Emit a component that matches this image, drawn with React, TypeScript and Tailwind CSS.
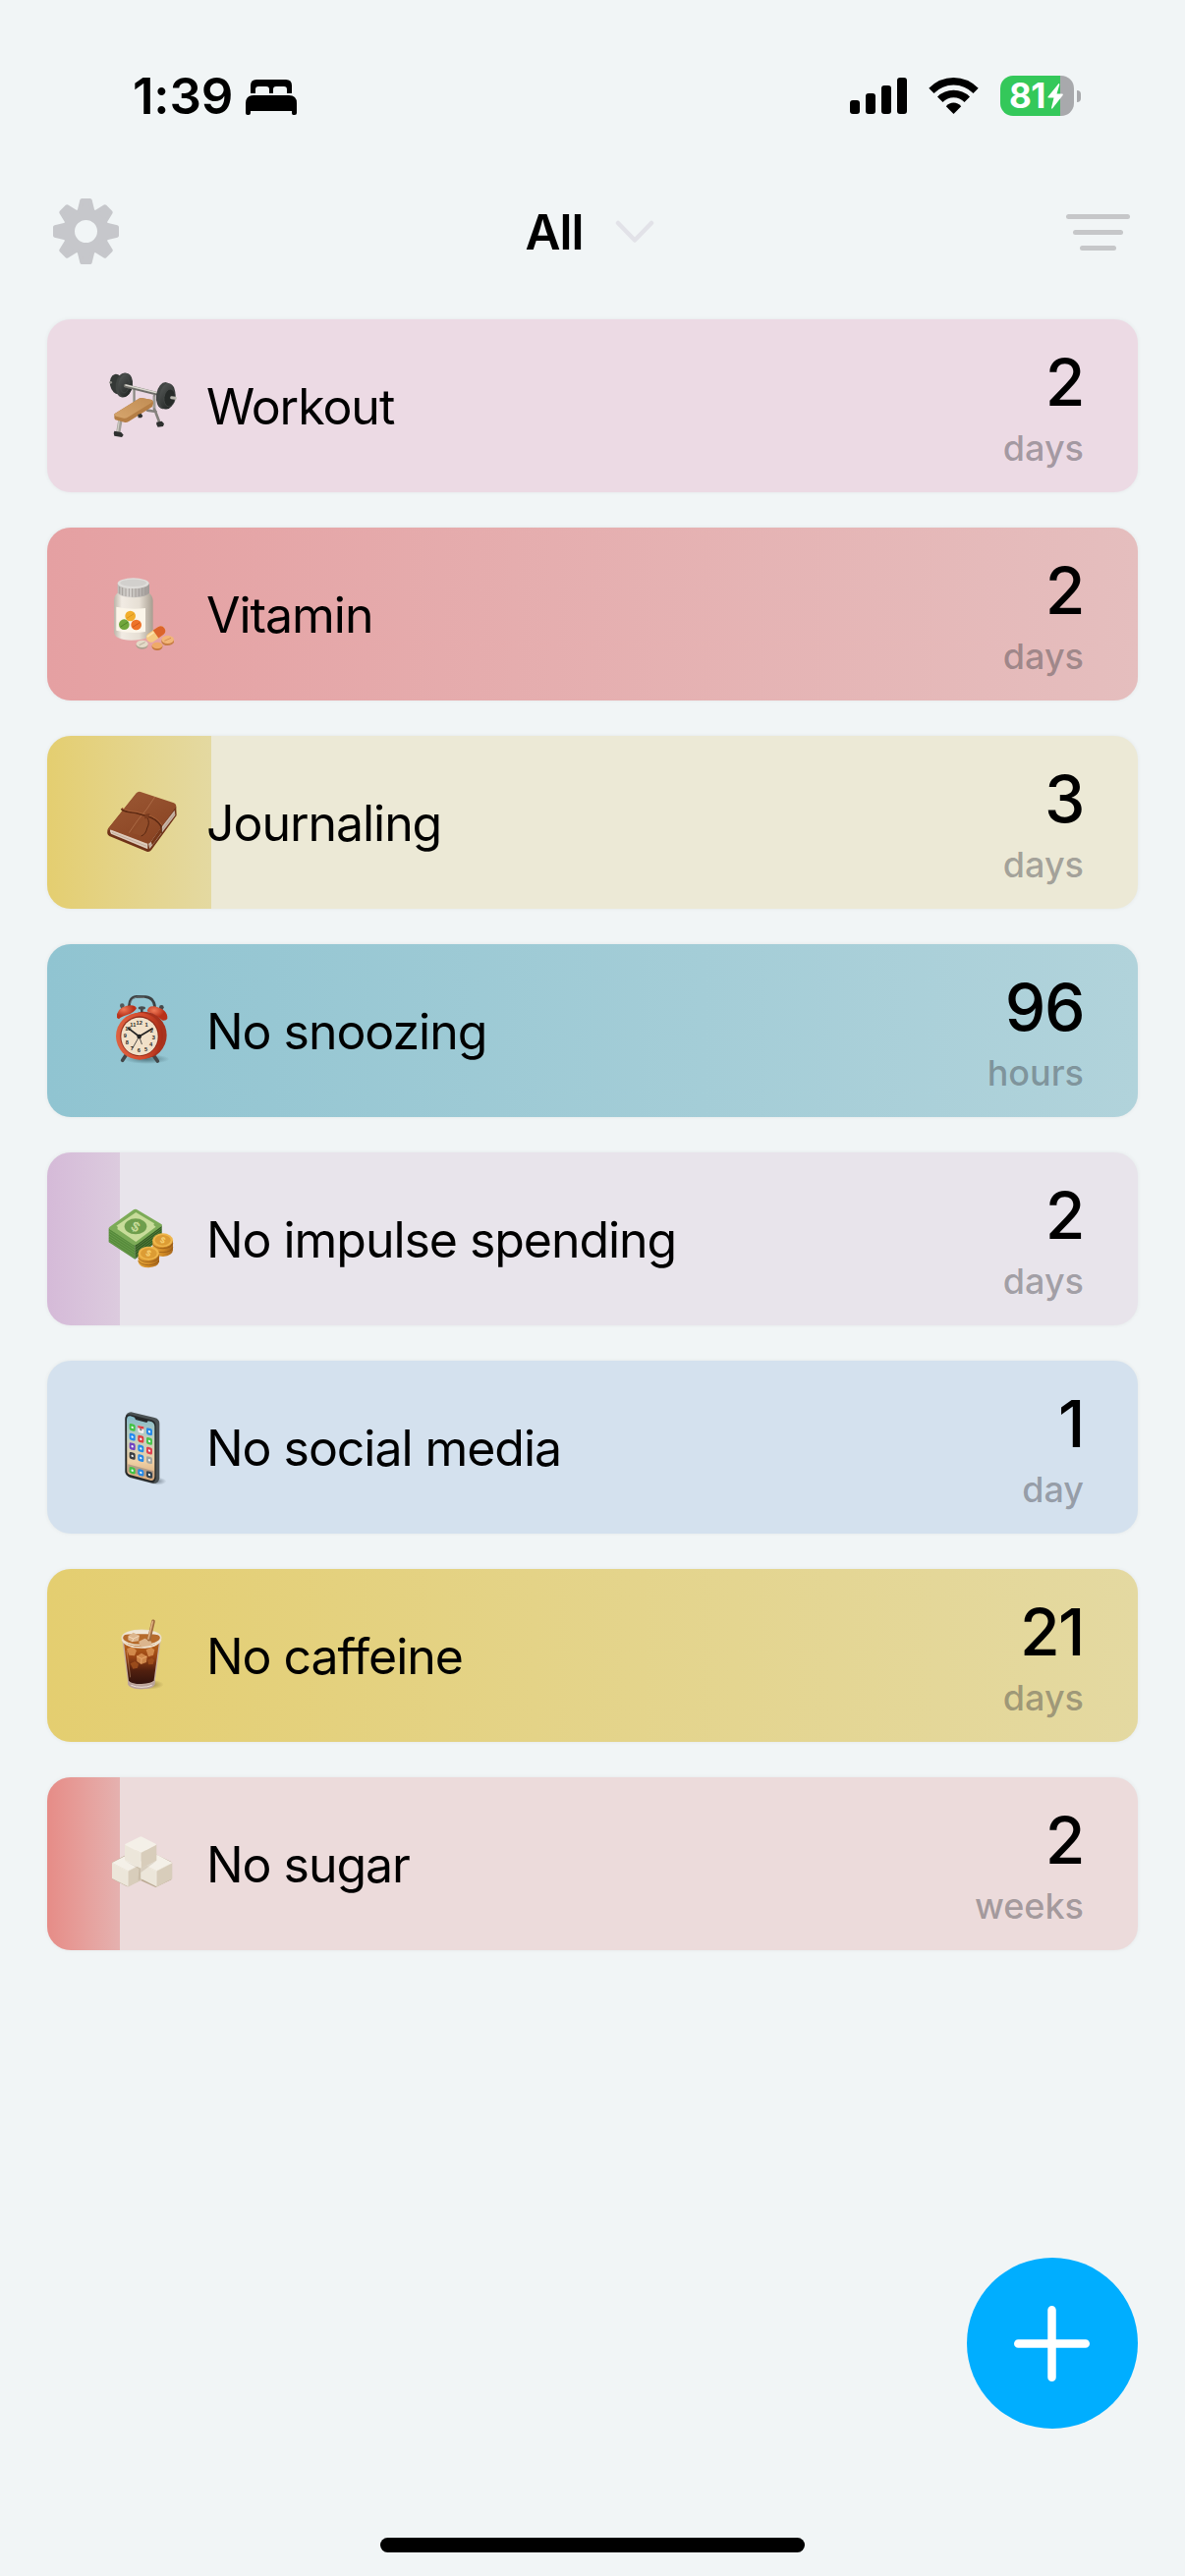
import React from 'react';
import clsx from 'clsx';

interface Habit {
  id: string;
  name: string;
  count: number;
  unit: string;
  icon: React.ReactNode;
  progress: number;
  track: string;
  fill: string;
}

const WorkoutIcon = () => (
  <svg viewBox="195 189 240 240" className="w-20 h-20">
    <defs>
      <linearGradient id="bench" x1="0" y1="1" x2="1" y2="0">
        <stop offset="0" stopColor="#d6a56d" />
        <stop offset="1" stopColor="#c18d54" />
      </linearGradient>
      <linearGradient id="plate" x1="0" y1="0" x2="1" y2="1">
        <stop offset="0" stopColor="#565a58" />
        <stop offset="1" stopColor="#1d201f" />
      </linearGradient>
    </defs>
    <path d="M289 255V302M351 280V318L368 362M330 323L356 327M306 318V340" stroke="#85827d" strokeWidth="8" fill="none" strokeLinecap="round" />
    <path d="M287 255V300M351 280V316" stroke="#b9b7b1" strokeWidth="3" fill="none" />
    <path d="M247 354L241 390" stroke="#a19e97" strokeWidth="13" />
    <path d="M244 354L239 388" stroke="#cfcdc5" strokeWidth="4" />
    <ellipse cx="237" cy="243" rx="21" ry="31" fill="#343836" transform="rotate(-12 237 243)" />
    <ellipse cx="258" cy="246" rx="25" ry="38" fill="#414543" transform="rotate(8 258 246)" />
    <ellipse cx="263" cy="246" rx="22" ry="36" fill="url(#plate)" transform="rotate(8 263 246)" />
    <ellipse cx="261" cy="246" rx="13" ry="24" fill="none" stroke="#454947" strokeWidth="2" transform="rotate(8 261 246)" />
    <path d="M263 248L362 273" stroke="#6f6e69" strokeWidth="11" strokeLinecap="round" />
    <path d="M264 246L362 270" stroke="#dad8cf" strokeWidth="5" strokeLinecap="round" />
    <ellipse cx="382" cy="278" rx="25" ry="41" fill="#414543" transform="rotate(8 382 278)" />
    <ellipse cx="391" cy="280" rx="24" ry="40" fill="url(#plate)" transform="rotate(8 391 280)" />
    <ellipse cx="398" cy="285" rx="17" ry="27" fill="#272b29" stroke="#494d4b" strokeWidth="2" transform="rotate(8 398 285)" />
    <path d="M404 284L415 286" stroke="#bbb9b0" strokeWidth="9" strokeLinecap="round" />
    <circle cx="218" cy="238" r="4" fill="#8f8e88" />
    <path d="M229 334L304 287Q309 284 316 286L344 291Q349 294 348 302L345 312L273 357Q266 361 259 359L232 352Q228 349 229 343Z" fill="#b57e45" />
    <path d="M230 334L304 287Q309 284 316 286L344 291Q349 295 343 299L270 344Q265 348 258 347L234 341Q229 339 230 334Z" fill="url(#bench)" />
    <path d="M229 386L250 390L257 398L252 405L229 401Q225 393 229 386Z" fill="#2e302f" />
    <path d="M358 359L374 356L381 364L378 372L362 374Q355 367 358 359Z" fill="#2e302f" />
    <path d="M301 336L311 333L316 340L312 346L302 346Z" fill="#2e302f" />
  </svg>
);

const VitaminIcon = () => (
  <svg viewBox="195 180 240 240" className="w-20 h-20">
    <defs>
      <linearGradient id="bottle">
        <stop offset="0" stopColor="#bdb5a9" />
        <stop offset="0.2" stopColor="#f1ebe3" />
        <stop offset="0.65" stopColor="#e6dfd4" />
        <stop offset="1" stopColor="#a79d90" />
      </linearGradient>
      <linearGradient id="cap">
        <stop offset="0" stopColor="#bdb9b5" />
        <stop offset="0.35" stopColor="#d8d5d1" />
        <stop offset="1" stopColor="#9f9a97" />
      </linearGradient>
    </defs>
    <path d="M241 234Q228 243 228 259V355Q229 379 281 380Q343 379 347 355V259Q346 243 333 234Z" fill="url(#bottle)" />
    <path d="M235 278Q279 288 324 282V354Q279 361 235 350Z" fill="#fbf5e9" />
    <path d="M239 208V235Q245 249 287 250Q330 249 336 235V208Z" fill="url(#cap)" />
    <path d="M245 216V238M254 219V243M264 221V246M274 222V247M284 222V248M294 222V248M304 221V246M314 220V244M324 218V241" stroke="#9d9894" strokeWidth="2.5" />
    <ellipse cx="287" cy="206" rx="48" ry="16" fill="#dfddda" />
    <ellipse cx="287" cy="205" rx="40" ry="11" fill="#d2d0cd" />
    <circle cx="278" cy="306" r="16" fill="#f2ae2d" />
    <path d="M267 313L289 299" stroke="#cc8818" strokeWidth="2" />
    <circle cx="259" cy="332" r="16" fill="#71a63d" />
    <path d="M248 339L270 325" stroke="#3f7420" strokeWidth="2" />
    <circle cx="296" cy="333" r="16" fill="#ee7329" />
    <path d="M285 340L307 326" stroke="#bd4b13" strokeWidth="2" />
    <g transform="rotate(-35 356 362)">
      <rect x="324" y="347" width="64" height="29" rx="14" fill="#f5c981" />
      <path d="M356 347H374Q388 349 388 361Q388 375 374 376H356Z" fill="#dc642b" />
      <path d="M332 353H352" stroke="#ffe4ae" strokeWidth="5" strokeLinecap="round" />
    </g>
    <path d="M373 378V386Q378 396 391 396Q407 395 411 386V378Z" fill="#c87e45" />
    <ellipse cx="392" cy="378" rx="19" ry="12" fill="#f2b678" />
    <path d="M382 382L402 373" stroke="#c47b3f" strokeWidth="2" />
    <path d="M296 391V398Q301 407 314 407Q327 407 331 398V391Z" fill="#aaa18e" />
    <ellipse cx="314" cy="391" rx="18" ry="11" fill="#e4dbc8" />
    <path d="M305 395L323 386" stroke="#9f9580" strokeWidth="2" />
    <path d="M344 396V402Q348 411 360 411Q372 411 376 402V396Z" fill="#c5763a" />
    <ellipse cx="360" cy="396" rx="16" ry="10" fill="#efaa68" />
  </svg>
);

const JournalIcon = () => (
  <svg viewBox="195 171 240 240" className="w-20 h-20">
    <defs>
      <linearGradient id="leather" x1="0" y1="0" x2="0.6" y2="1">
        <stop offset="0" stopColor="#9c5935" />
        <stop offset="1" stopColor="#8a4423" />
      </linearGradient>
    </defs>
    <path d="M209 312L298 202L412 236Q420 240 418 249L419 270L342 376Q336 383 328 380L214 333Q206 328 208 318Z" fill="#6f3218" />
    <path d="M217 311L331 354L331 373L219 326Q213 319 217 311Z" fill="#decbbb" />
    <path d="M333 356L413 254L415 269L337 372Z" fill="#c9b5a6" />
    <path d="M222 322L328 364M337 364L414 263" stroke="#a08b7b" strokeWidth="1.5" fill="none" />
    <path d="M211 309L296 202Q301 196 309 198L411 232Q421 237 416 246L340 351Q335 358 326 355L222 315Q215 311 209 318Z" fill="url(#leather)" />
    <path d="M353 213L328 251Q300 282 274 323" fill="none" stroke="#b87851" strokeWidth="2" />
    <path d="M250 250Q258 259 295 262L326 271Q360 280 372 303V324" fill="none" stroke="#5d2912" strokeWidth="5" />
    <path d="M252 247Q262 256 297 259L328 268Q360 276 374 299" fill="none" stroke="#a65e37" strokeWidth="3" />
    <path d="M326 271Q338 290 327 312Q323 328 311 332L281 324L320 278Z" fill="#914d2a" />
    <path d="M329 276Q339 291 329 309Q325 328 311 333" fill="none" stroke="#592711" strokeWidth="3" />
    <path d="M323 266L338 264L332 279L321 280Z" fill="#7a3b1e" />
    <path d="M341 350L372 307L372 324L345 361Z" fill="#783719" />
  </svg>
);

const ClockIcon = () => {
  const numerals = [
    ['12', 305, 278], ['1', 327, 284], ['2', 343, 302], ['3', 349, 323],
    ['4', 341, 344], ['5', 326, 359], ['6', 304, 363], ['7', 283, 357],
    ['8', 268, 339], ['9', 262, 318], ['10', 271, 298], ['11', 286, 284],
  ] as const;

  return (
    <svg viewBox="195 177 240 240" className="w-20 h-20">
      <defs>
        <radialGradient id="bell" cx="0.35" cy="0.3">
          <stop offset="0" stopColor="#f07a57" />
          <stop offset="1" stopColor="#b93119" />
        </radialGradient>
        <linearGradient id="clock-rim">
          <stop offset="0" stopColor="#dd6342" />
          <stop offset="0.6" stopColor="#d34a2c" />
          <stop offset="1" stopColor="#a62c17" />
        </linearGradient>
        <radialGradient id="clock-shadow">
          <stop offset="0" stopColor="#304f58" stopOpacity="0.65" />
          <stop offset="1" stopColor="#304f58" stopOpacity="0" />
        </radialGradient>
      </defs>
      <ellipse cx="328" cy="384" rx="70" ry="15" fill="url(#clock-shadow)" />
      <path d="M266 370L254 388M347 370L361 390" stroke="#424648" strokeWidth="11" strokeLinecap="round" />
      <path d="M274 222Q276 194 296 193L325 194Q350 197 353 225" fill="none" stroke="#3d4244" strokeWidth="8" />
      <path d="M278 215Q281 197 299 195L322 196" fill="none" stroke="#909698" strokeWidth="2" />
      <path d="M253 221V231M373 226V236M313 228V243" stroke="#373b3d" strokeWidth="7" />
      <circle cx="253" cy="221" r="7" fill="#53585a" />
      <circle cx="373" cy="226" r="7" fill="#45494b" />
      <ellipse cx="313" cy="228" rx="11" ry="5" fill="#484c4e" />
      <path d="M237 258Q234 229 267 221Q292 216 297 229Q291 242 268 249Q249 254 243 262Z" fill="url(#bell)" />
      <path d="M329 238Q332 220 352 223Q393 233 391 260Q388 267 377 266Q357 249 329 238Z" fill="url(#bell)" />
      <ellipse cx="319" cy="311" rx="70" ry="72" fill="#a8321d" />
      <ellipse cx="306" cy="314" rx="72" ry="72" fill="url(#clock-rim)" />
      <ellipse cx="306" cy="314" rx="59" ry="61" fill="#8e2b19" />
      <ellipse cx="306" cy="315" rx="56" ry="58" fill="#f1e0c8" />
      <g fontFamily="Liberation Sans" fontWeight="700" fontSize="17" fill="#292725" textAnchor="middle">
        {numerals.map(([n, x, y]) => (
          <text key={n} x={x} y={y}>{n}</text>
        ))}
      </g>
      <path d="M305 315L271 289M305 315L345 291" stroke="#222" strokeWidth="5" strokeLinecap="round" />
      <path d="M305 315L285 350M305 315L313 338" stroke="#333" strokeWidth="2.5" strokeLinecap="round" />
      <circle cx="305" cy="315" r="7" fill="#222" />
    </svg>
  );
};

const MoneyIcon = () => (
  <svg viewBox="195 183 240 240" className="w-20 h-20">
    <defs>
      <linearGradient id="coin-side">
        <stop offset="0" stopColor="#e3a63c" />
        <stop offset="0.5" stopColor="#d18b27" />
        <stop offset="1" stopColor="#a7661b" />
      </linearGradient>
    </defs>
    <path d="M212 270L292 322V365L212 313Z" fill="#568a3b" />
    <path d="M292 322L374 262V299L292 365Z" fill="#335a23" />
    <path d="M212 278L292 330L374 270M212 286L292 338L374 277M212 294L292 346L374 284M212 302L292 354L374 291M212 309L292 361L374 298" fill="none" stroke="#82b25f" strokeWidth="2" opacity="0.65" />
    <path d="M288 214Q294 210 301 215L374 259Q376 262 373 265L300 319Q292 325 285 320L213 272Q211 269 215 266Z" fill="#7cab57" />
    <path d="M295 222L351 256Q346 262 356 266L295 312L238 273Q242 266 235 263Z" fill="#c8dc9a" />
    <ellipse cx="294" cy="265" rx="34" ry="24" fill="#6e9e4d" />
    <text x="294" y="280" textAnchor="middle" fontFamily="Liberation Sans" fontWeight="700" fontSize="42" fill="#c8dc9a" transform="rotate(28 294 266)">$</text>
    <path d="M346 307V340Q350 357 378 357Q407 354 408 337V307Z" fill="url(#coin-side)" />
    <path d="M346 319Q356 333 378 332Q402 331 408 317M346 331Q356 345 378 344Q402 343 408 329" fill="none" stroke="#905414" strokeWidth="2" />
    <ellipse cx="377" cy="307" rx="31" ry="21" fill="#efb64b" />
    <ellipse cx="377" cy="307" rx="24" ry="16" fill="#dc9c34" />
    <text x="377" y="316" textAnchor="middle" fontFamily="Liberation Sans" fontWeight="700" fontSize="26" fill="#f9d478" transform="rotate(25 377 307)">$</text>
    <path d="M302 348V374Q307 391 334 391Q362 389 366 373V348Z" fill="url(#coin-side)" />
    <path d="M302 360Q310 374 334 373Q358 373 366 359M302 370Q310 383 334 383Q358 382 366 369" fill="none" stroke="#905414" strokeWidth="2" />
    <ellipse cx="334" cy="347" rx="32" ry="21" fill="#efb64b" />
    <ellipse cx="334" cy="347" rx="25" ry="16" fill="#dc9c34" />
    <text x="334" y="356" textAnchor="middle" fontFamily="Liberation Sans" fontWeight="700" fontSize="26" fill="#f9d478" transform="rotate(25 334 347)">$</text>
  </svg>
);

const PhoneIcon = () => {
  const apps = [
    ['#43c345', '#f2eeee', '#2689e8'],
    ['#2389ef', '#df3c40', '#48c44b'],
    ['#7242bf', '#278be7', '#df4050'],
    ['#3b3e42', '#2588e7', '#a2a4a0'],
  ];

  return (
    <svg viewBox="195 174 240 240" className="w-20 h-20">
      <defs>
        <linearGradient id="phone-screen" x1="0" y1="0" x2="0" y2="1">
          <stop offset="0" stopColor="#82bac9" />
          <stop offset="0.35" stopColor="#c2cfbf" />
          <stop offset="0.7" stopColor="#efd0a5" />
          <stop offset="1" stopColor="#d6a779" />
        </linearGradient>
        <radialGradient id="phone-shadow">
          <stop offset="0" stopColor="#44515e" stopOpacity="0.6" />
          <stop offset="1" stopColor="#44515e" stopOpacity="0" />
        </radialGradient>
      </defs>
      <ellipse cx="360" cy="398" rx="28" ry="12" fill="url(#phone-shadow)" />
      <path d="M263 203Q265 188 280 187L352 204Q367 208 367 222V389Q363 407 347 405L277 387Q263 381 262 370Z" fill="#4a5153" />
      <path d="M262 207Q263 193 276 194L342 211Q355 215 356 228V388Q354 404 342 402L276 385Q264 379 263 369Z" fill="#252829" />
      <path d="M267 209Q268 198 278 199L291 203L294 210L328 219L332 214L342 216Q351 219 352 230V385Q351 397 341 396L279 379Q268 376 268 367Z" fill="url(#phone-screen)" />
      {apps.map((row, r) =>
        row.map((color, c) => (
          <g key={`${r}-${c}`} transform={`translate(${275 + c * 26} ${221 + r * 29 + c * 6.5}) skewY(14)`}>
            <rect width="18" height="21" rx="5" fill={color} />
            <circle cx="9" cy="10.5" r="3.5" fill={c === 1 && r === 0 ? '#777' : '#eef4f8'} />
          </g>
        ))
      )}
      <path d="M301 228L319 232V239L301 235Z" fill="#df3c40" />
      <path d="M271 346L349 367V389L271 370Z" fill="#a69181" opacity="0.75" />
      {['#43c345', '#2588e7', '#33424e'].map((color, c) => (
        <g key={color} transform={`translate(${275 + c * 26} ${353 + c * 6.5}) skewY(14)`}>
          <rect width="18" height="20" rx="5" fill={color} />
          <circle cx="9" cy="10" r="3.5" fill="#e9f3f7" />
        </g>
      ))}
    </svg>
  );
};

const CoffeeIcon = () => (
  <svg viewBox="195 165 240 240" className="w-20 h-20">
    <defs>
      <linearGradient id="coffee" x1="0" y1="0" x2="0" y2="1">
        <stop offset="0" stopColor="#c4701f" />
        <stop offset="0.4" stopColor="#984314" />
        <stop offset="0.7" stopColor="#52200f" />
        <stop offset="1" stopColor="#32130d" />
      </linearGradient>
      <radialGradient id="coffee-shadow">
        <stop offset="0" stopColor="#6c5923" stopOpacity="0.6" />
        <stop offset="1" stopColor="#6c5923" stopOpacity="0" />
      </radialGradient>
    </defs>
    <ellipse cx="338" cy="374" rx="42" ry="15" fill="url(#coffee-shadow)" />
    <path d="M252 231L271 373Q278 388 312 388Q346 387 352 373L372 231Z" fill="#c8b1a0" />
    <path d="M257 235L273 362Q280 372 312 372Q344 371 350 361L367 235Z" fill="url(#coffee)" />
    <ellipse cx="312" cy="231" rx="59" ry="23" fill="#b66b2c" stroke="#eadfca" strokeWidth="5" />
    <path d="M258 222Q270 208 312 208Q354 209 367 224Q351 219 312 220Q273 219 258 222Z" fill="#f1e7d7" />
    <path d="M271 226L287 215L306 224L303 241L283 244L271 238ZM304 242L322 233L343 243L339 258L322 262L306 255Z" fill="#dcb58d" />
    <path d="M273 228L287 234L304 226M287 234L284 243" fill="none" stroke="#f5d8b8" strokeWidth="3" />
    <path d="M267 265L284 258L297 270L291 286L274 284ZM297 287L312 278L329 288L327 306L311 312L298 303ZM326 268L341 260L352 268L348 284L333 289Z" fill="#d99353" opacity="0.85" />
    <path d="M278 310L292 303L303 311L300 323L286 326ZM330 299L344 293L351 299L347 312L334 313Z" fill="#a4521e" opacity="0.8" />
    <path d="M297 287L312 295L329 288M312 295L311 310" stroke="#f2b77b" strokeWidth="2" fill="none" />
    <path d="M253 237Q265 261 312 261Q359 260 371 237" fill="none" stroke="#efe2cf" strokeWidth="5" />
    <path d="M348 181L335 236" stroke="#9f6a3f" strokeWidth="11" strokeLinecap="round" />
    <path d="M346 182L333 234" stroke="#dcae7e" strokeWidth="5" strokeLinecap="round" />
    <path d="M270 361Q277 374 312 374Q347 373 354 361L352 375Q346 388 312 388Q278 387 271 375Z" fill="#baa39a" />
    <path d="M280 376Q295 382 312 382Q331 382 344 376" fill="none" stroke="#ece1d9" strokeWidth="3" />
    <path d="M267 270L278 352" stroke="#ecc295" strokeWidth="2" opacity="0.6" />
  </svg>
);

const SugarIcon = () => {
  const cubes = [
    { x: 222, y: 264 },
    { x: 309, y: 264 },
    { x: 261, y: 208 },
  ];

  return (
    <svg viewBox="195 171 240 240" className="w-20 h-20">
      <path d="M222 287L309 240L403 285V340L355 363L309 342L268 361L222 337Z" fill="#baa992" />
      {cubes.map(({ x, y }) => (
        <g key={`${x}-${y}`} transform={`translate(${x} ${y})`}>
          <path d="M0 24L49 49V97L0 72Z" fill="#ece6da" />
          <path d="M49 49L97 24V73L49 98Z" fill="#d8cdbb" />
          <path d="M0 24L45 1Q49 -1 53 1L97 24L49 49Z" fill="#f4f0e8" />
          <path d="M2 25L49 49L95 25M49 49V95" fill="none" stroke="#faf7ef" strokeWidth="1.5" />
        </g>
      ))}
      <path d="M261 282L310 306L358 282L310 318V340L302 342L304 307Z" fill="#aa9980" opacity="0.3" />
    </svg>
  );
};

const habits: Habit[] = [
  {
    id: 'workout',
    name: 'Workout',
    count: 2,
    unit: 'days',
    icon: <WorkoutIcon />,
    progress: 0,
    track: 'bg-[#ecdae4]',
    fill: '',
  },
  {
    id: 'vitamin',
    name: 'Vitamin',
    count: 2,
    unit: 'days',
    icon: <VitaminIcon />,
    progress: 100,
    track: 'bg-[#ecdbdb]',
    fill: 'from-[#e5a0a2] to-[#e5bebe]',
  },
  {
    id: 'journaling',
    name: 'Journaling',
    count: 3,
    unit: 'days',
    icon: <JournalIcon />,
    progress: 15.05,
    track: 'bg-[#ece9d6]',
    fill: 'from-[#e4ce70] to-[#e4d9a1]',
  },
  {
    id: 'snoozing',
    name: 'No snoozing',
    count: 96,
    unit: 'hours',
    icon: <ClockIcon />,
    progress: 100,
    track: 'bg-[#d6e5e9]',
    fill: 'from-[#90c4d1] to-[#b1d3db]',
  },
  {
    id: 'spending',
    name: 'No impulse spending',
    count: 2,
    unit: 'days',
    icon: <MoneyIcon />,
    progress: 6.67,
    track: 'bg-[#e8e4eb]',
    fill: 'from-[#d5bad8] to-[#dccbde]',
  },
  {
    id: 'social',
    name: 'No social media',
    count: 1,
    unit: 'day',
    icon: <PhoneIcon />,
    progress: 0,
    track: 'bg-[#d4e1ee]',
    fill: '',
  },
  {
    id: 'caffeine',
    name: 'No caffeine',
    count: 21,
    unit: 'days',
    icon: <CoffeeIcon />,
    progress: 100,
    track: 'bg-[#ece9d6]',
    fill: 'from-[#e4ce70] to-[#e4d9a1]',
  },
  {
    id: 'sugar',
    name: 'No sugar',
    count: 2,
    unit: 'weeks',
    icon: <SugarIcon />,
    progress: 6.67,
    track: 'bg-[#ecdbdb]',
    fill: 'from-[#e68c87] to-[#e5b1af]',
  },
];

const StatusBar = () => (
  <div className="flex h-[118px] items-end justify-between pl-[135px] pr-[106px]">
    <div className="flex items-end gap-[13px]">
      <span className="text-[51px] leading-[36px] font-semibold tracking-[-0.2px] pb-[2px]">1:39</span>
      <svg viewBox="0 0 52 36" className="w-[52px] h-9 mb-px">
        <path d="M5 14V6Q5 0 11 0H41Q47 0 47 6V14H42V10Q42 7 39 7H31Q28 7 28 10V14H24V10Q24 7 21 7H13Q10 7 10 10V14Z" />
        <path d="M0 24Q0 16 8 16H44Q52 16 52 24V34Q52 36 50 36H48.500Q47 36 47 34V32H5V34Q5 36 3 36H2Q0 36 0 34Z" />
      </svg>
    </div>
    <div className="flex items-center">
      <svg viewBox="0 0 58 37" className="w-[58px] h-[37px]">
        <rect x="0" y="23" width="10" height="14" rx="3" />
        <rect x="16" y="16" width="10" height="21" rx="3" />
        <rect x="32" y="8" width="10" height="29" rx="3" />
        <rect x="48" y="0" width="10" height="37" rx="3" />
      </svg>
      <svg viewBox="0 0 51 37" className="ml-[22px] w-[51px] h-[37px]">
        <path d="M25.500 37L33.200 29.200Q30 25.500 25.500 25.500Q21 25.500 17.800 29.200Z" />
        <path d="M9 19.500Q16 12.800 25.500 12.800Q35 12.800 42 19.500L36.500 25Q32 20.300 25.500 20.300Q19 20.300 14.500 25Z" />
        <path d="M0.300 10.800Q11 0 25.500 0Q40 0 50.700 10.800L45.500 16Q37 7.500 25.500 7.500Q14 7.500 5.500 16Z" />
      </svg>
      <div className="ml-[22px] flex h-[41px] w-[75px] items-center rounded-[13px] bg-linear-to-r from-[#34c85a] from-[81.5%] to-[#a8a9ac] to-[81.5%] pl-[9px]">
        <span className="text-[35px] leading-none font-bold tracking-[-0.5px] text-white">81</span>
        <svg viewBox="0 0 16 26" className="ml-[2px] h-[26px] w-4 shrink-0 fill-white">
          <path d="M11.500 0L0.500 13.500Q0 14.500 1 14.500H6.500L4 25Q4.300 26 5 25.500L15.800 11.800Q16 10.500 15 10.500H9.500L12.300 1Q12.300 0 11.500 0Z" />
        </svg>
      </div>
      <div className="ml-[3px] h-3 w-1 rounded-r-full bg-[#a8a9ac]" />
    </div>
  </div>
);

const Header = () => (
  <header className="flex h-[207px] items-start justify-between pl-[54px] pr-[56px] pt-[84px]">
    <button aria-label="Settings" className="w-[107px]">
      <svg viewBox="-33.500 -33.500 67 67" className="w-[67px] h-[67px]">
        <circle r="17.500" fill="none" stroke="#c6c7cb" strokeWidth="12" />
        {[0, 45, 90, 135, 180, 225, 270, 315].map((angle) => (
          <path
            key={angle}
            d="M-7 -20L-4.200 -31.500H4.200L7 -20Z"
            fill="#c6c7cb"
            stroke="#c6c7cb"
            strokeWidth="4"
            strokeLinejoin="round"
            transform={`rotate(${angle})`}
          />
        ))}
      </svg>
    </button>
    <button className="flex h-[67px] items-center gap-[33px]">
      <span className="pt-px text-[49.5px] font-semibold tracking-[-1px]">All</span>
      <svg viewBox="0 0 40 24" className="w-10 h-6">
        <path d="M3 3L20 20.500L37 3" fill="none" stroke="#e2e2e8" strokeWidth="4.500" strokeLinecap="round" strokeLinejoin="round" />
      </svg>
    </button>
    <button aria-label="Filter" className="flex h-[67px] w-[110px] flex-col items-end justify-center">
      <span className="mt-[2px] flex w-[65px] flex-col items-center gap-[11.5px]">
        <span className="h-[4.5px] w-[65px] rounded-full bg-[#c6c7c9]" />
        <span className="h-[4.5px] w-[51px] rounded-full bg-[#c6c7c9]" />
        <span className="h-[4.5px] w-[37px] rounded-full bg-[#c6c7c9]" />
      </span>
    </button>
  </header>
);

const HabitRow: React.FC<{ habit: Habit }> = ({ habit }) => (
  <li className={clsx('relative h-44 overflow-hidden rounded-[24px] shadow-[0_0_4px_rgba(0,0,0,0.06)]', habit.track)}>
    {habit.progress > 0 && (
      <div
        className={clsx('absolute inset-y-0 left-0 bg-linear-to-r', habit.fill)}
        style={{ width: `${habit.progress}%` }}
      />
    )}
    <div className="relative flex h-full items-center pl-[57px] pr-[55px]">
      {habit.icon}
      <span className="ml-[25px] flex-1 pt-[2px] text-[50px] tracking-[-1.05px]">{habit.name}</span>
      <div className="flex flex-col items-end pt-[14px]">
        <span className="text-[66px] leading-[72px] font-medium tracking-[-1.5px]">{habit.count}</span>
        <span className="text-[36px] leading-[62px] font-medium text-[#3c3c43]/42">{habit.unit}</span>
      </div>
    </div>
  </li>
);

const App: React.FC = () => {
  return (
    <div className="flex h-[2622px] w-[1206px] flex-col bg-[#f1f5f6] font-['Inter',sans-serif] text-black">
      <StatusBar />
      <Header />

      {/* Habit list */}
      <ul className="flex flex-col gap-9 px-12">
        {habits.map((habit) => (
          <HabitRow key={habit.id} habit={habit} />
        ))}
      </ul>

      {/* Add button and home indicator */}
      <div className="mt-auto flex flex-col px-12 pb-6">
        <button aria-label="Add habit" className="flex h-[174px] w-[174px] items-center justify-center self-end rounded-full bg-[#00aeff]">
          <svg viewBox="0 0 77 77" className="mr-[2px] w-[77px] h-[77px]">
            <path d="M38.500 4.250V72.750M4.250 38.500H72.750" stroke="#fff" strokeWidth="8.500" strokeLinecap="round" />
          </svg>
        </button>
        <div className="mt-[111px] h-[15px] w-[432px] self-center rounded-full bg-black" />
      </div>
    </div>
  );
};

export default App;
